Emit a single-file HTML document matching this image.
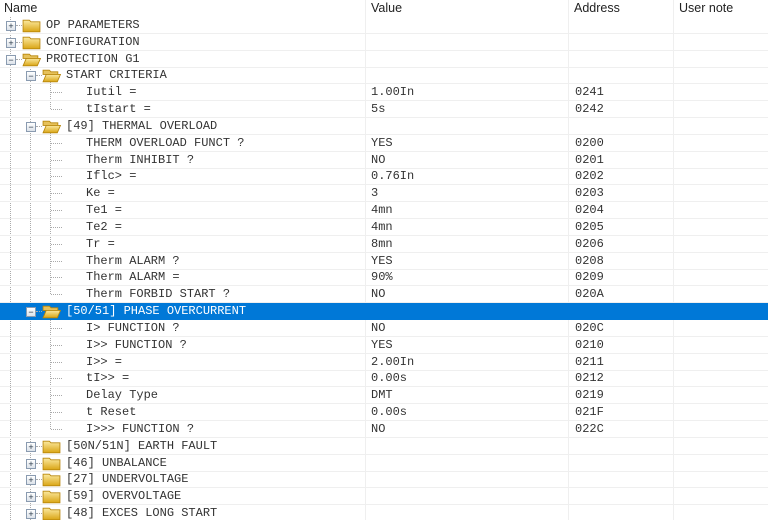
<!DOCTYPE html>
<html style="overflow:hidden;height:520px"><head><meta charset="utf-8"><style>
body{margin:0;width:768px;height:520px;overflow:hidden;background:#fff;position:relative;font-family:"Liberation Mono",monospace;font-size:12px;color:#333}
.h{position:absolute;top:0;height:17px;font:12.5px "Liberation Sans",sans-serif;color:#222;line-height:17px}
.r{position:absolute;left:0;width:768px;height:17px;border-bottom:1px solid #efefef;box-sizing:border-box;line-height:16px;white-space:pre}
.r span{position:absolute;top:0}
.sel{background:#0078d7;color:#fff;border-bottom-color:#0078d7}
.c{position:absolute;top:0;width:1px;height:520px;background:#efefef}
.vl{position:absolute;width:0;border-left:1px dotted #aaa}
.bx{position:absolute;top:4px;width:8px;height:8px;border:1px solid #8a9bb0;background:linear-gradient(#fff,#dde3ea);font:9px/8px "Liberation Sans",sans-serif;text-align:center;color:#234}
.hd{position:absolute;top:8px;border-top:1px dotted #aaa}
.f{position:absolute;top:1px}
</style></head><body>
<div class="h" style="left:4px">Name</div>
<div class="h" style="left:371px">Value</div>
<div class="h" style="left:574px">Address</div>
<div class="h" style="left:679px">User note</div>
<div class="c" style="left:365px"></div><div class="c" style="left:568px"></div><div class="c" style="left:673px"></div>
<div id="rows"></div>
<svg width="0" height="0" style="position:absolute"><defs>
<linearGradient id="g" x1="0" y1="0" x2="0" y2="1"><stop offset="0" stop-color="#fbe9a0"/><stop offset="1" stop-color="#d9a514"/></linearGradient>
<symbol id="fc" viewBox="0 0 18 14"><path d="M1 2h6l1.5 1.5H17V13H1z" fill="url(#g)" stroke="#b8860b" stroke-width="0.8"/></symbol>
<symbol id="fo" viewBox="0 0 18 14"><path d="M1 2h6l1.5 1.5H15V6H1z" fill="#e6c15a" stroke="#b8860b" stroke-width="0.8"/><path d="M1 13L4 6h13.5l-3 7z" fill="url(#g)" stroke="#b8860b" stroke-width="0.8"/></symbol>
</defs></svg>
<script>
var D=[
[0,'+','OP PARAMETERS'],[0,'+','CONFIGURATION'],[0,'-','PROTECTION G1'],
[1,'-','START CRITERIA'],[2,'','Iutil =','1.00In','0241'],[2,'','tIstart =','5s','0242'],
[1,'-','[49] THERMAL OVERLOAD'],
[2,'','THERM OVERLOAD FUNCT ?','YES','0200'],[2,'','Therm INHIBIT ?','NO','0201'],[2,'','Iflc> =','0.76In','0202'],[2,'','Ke =','3','0203'],[2,'','Te1 =','4mn','0204'],[2,'','Te2 =','4mn','0205'],[2,'','Tr =','8mn','0206'],[2,'','Therm ALARM ?','YES','0208'],[2,'','Therm ALARM =','90%','0209'],[2,'','Therm FORBID START ?','NO','020A'],
[1,'-','[50/51] PHASE OVERCURRENT'],
[2,'','I> FUNCTION ?','NO','020C'],[2,'','I>> FUNCTION ?','YES','0210'],[2,'','I>> =','2.00In','0211'],[2,'','tI>> =','0.00s','0212'],[2,'','Delay Type','DMT','0219'],[2,'','t Reset','0.00s','021F'],[2,'','I>>> FUNCTION ?','NO','022C'],
[1,'+','[50N/51N] EARTH FAULT'],[1,'+','[46] UNBALANCE'],[1,'+','[27] UNDERVOLTAGE'],[1,'+','[59] OVERVOLTAGE'],[1,'+','[48] EXCES LONG START']];
var h='',P=16.83;
function T(i){return (17+i*P).toFixed(2)}
h+='<div class="vl" style="left:10px;top:17px;height:503px"></div>';
h+='<div class="vl" style="left:30px;top:'+(17+2*P+12)+'px;height:'+(520-(17+2*P+12))+'px"></div>';
h+='<div class="vl" style="left:50px;top:'+(17+3*P+12)+'px;height:'+(2*P-4)+'px"></div>';
h+='<div class="vl" style="left:50px;top:'+(17+6*P+12)+'px;height:'+(10*P-4)+'px"></div>';
h+='<div class="vl" style="left:50px;top:'+(17+17*P+12)+'px;height:'+(7*P-4)+'px"></div>';
D.forEach(function(d,i){
 var s=i==17?' sel':'';var x='';
 if(d[0]<2){var bx=d[0]?26:6,fx=d[0]?42:22,tx=d[0]?66:46;
  x+='<div class="hd" style="left:'+(bx+10)+'px;width:'+(fx-bx-10)+'px"></div>';
  x+='<div class="bx" style="left:'+bx+'px">'+(d[1]=='+'?'+':'&minus;')+'</div>';
  x+='<svg class="f" style="left:'+fx+'px" width="19" height="15"><use href="#'+(d[1]=='-'?'fo':'fc')+'"/></svg>';
  x+='<span style="left:'+tx+'px">'+d[2]+'</span>';
 }else{
  x+='<div class="hd" style="left:51px;width:11px"></div>';
  x+='<span style="left:86px">'+d[2].replace(/>/g,'&gt;')+'</span><span style="left:371px">'+d[3]+'</span><span style="left:575px">'+d[4]+'</span>';
 }
 h+='<div class="r'+s+'" style="top:'+T(i)+'px">'+x+'</div>';
});
document.getElementById('rows').innerHTML=h;
</script>
</body></html>
